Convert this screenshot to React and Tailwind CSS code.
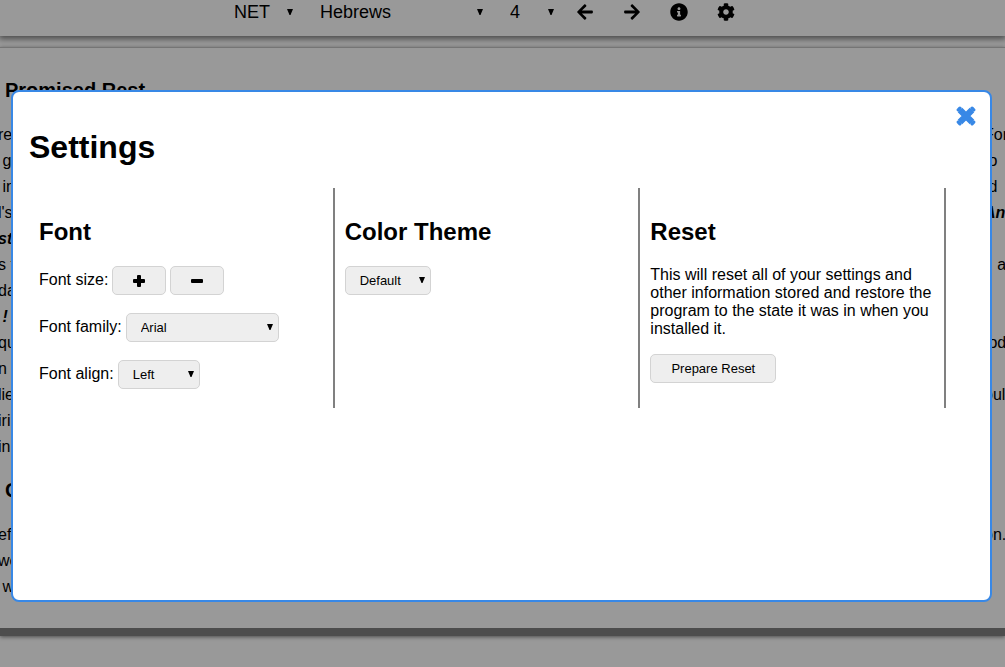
import { FaArrowLeft, FaArrowRight, FaInfoCircle, FaCog } from "react-icons/fa";

const NB = "\u00a0";

const firstPassage = [
  { start: "re", end: "For" },
  { start: NB + "g", end: "to" },
  { start: NB + "in", end: NB + "d" },
  { start: "l's", end: "And", endBold: true },
  { start: "st", end: "", startBold: true },
  { start: "s f", end: NB + NB + NB + "a" },
  { start: "da", end: "" },
  { start: NB + "!", end: "", startBold: true },
  { start: "qu", end: NB + "od" },
  { start: "n h", end: "" },
  { start: "lie", end: "ould" },
  { start: "iri", end: "" },
  { start: "in", end: "" },
];

const secondPassage = [
  { start: "ef", end: "on." },
  { start: "we", end: "" },
  { start: NB + "w", end: "" },
];

function Passage({ lines }) {
  return (
    <div className="-ml-0.5 leading-[26px]">
      {lines.map((line, i) => (
        <p key={i} className="flex h-[26px] justify-between whitespace-nowrap">
          <span className={line.startBold ? "font-bold italic" : ""}>{line.start}</span>
          <span className={line.endBold ? "w-[21px] font-bold italic" : "w-[21px]"}>{line.end}</span>
        </p>
      ))}
    </div>
  );
}

function Triangle({ className }) {
  return (
    <svg viewBox="0 0 6 6" className={className} aria-hidden="true">
      <path d="M0 0h6L3.5 6h-1z" fill="currentColor" />
    </svg>
  );
}

function HeaderSelect({ label, options, className }) {
  return (
    <div className={`relative ${className}`}>
      <select aria-label={label} className="h-6 w-full appearance-none bg-transparent pl-3.5 text-lg leading-6">
        {options.map((o) => (
          <option key={o}>{o}</option>
        ))}
      </select>
      <Triangle className="pointer-events-none absolute top-[9px] right-[7px] h-1.5 w-1.5" />
    </div>
  );
}

function PanelSelect({ id, label, options, className }) {
  return (
    <div className={`relative ${className}`}>
      <select
        id={id}
        aria-label={label}
        className="block h-[29px] w-full appearance-none rounded-[5px] border border-[#d3d3d3] bg-[#eee] pl-3.5 text-[13px]"
      >
        {options.map((o) => (
          <option key={o}>{o}</option>
        ))}
      </select>
      <Triangle className="pointer-events-none absolute top-[11px] right-1.5 h-1.5 w-1.5" />
    </div>
  );
}

function PanelButton({ className, ...props }) {
  return (
    <button
      type="button"
      className={`flex h-[29px] items-center justify-center rounded-[5px] border border-[#d3d3d3] bg-[#eee] text-[13px] ${className}`}
      {...props}
    />
  );
}

function Section({ title, children }) {
  return (
    <section className="border-r-2 border-[#808080] px-2.5 pt-[30px] pb-[19px]">
      <h2 className="mb-5 text-2xl leading-7 font-bold">{title}</h2>
      {children}
    </section>
  );
}

function HeaderButton({ label, children }) {
  return (
    <button type="button" aria-label={label} className="flex h-[23px] w-[47px] items-center justify-center text-lg">
      {children}
    </button>
  );
}

export default function App() {
  return (
    <div className="flex min-h-screen flex-col overflow-hidden bg-white font-['Liberation_Sans',Arial,sans-serif] text-base text-black">
      <header className="flex h-9 justify-center pr-9 shadow-[0_2px_6px_1px_#808080]">
        <div className="flex h-6 gap-1.5">
          <HeaderSelect label="Translation" options={["NET"]} className="w-20" />
          <HeaderSelect label="Book" options={["Hebrews"]} className="w-[184px]" />
          <HeaderSelect label="Chapter" options={["4"]} className="w-[65px]" />
        </div>
        <nav className="flex">
          <HeaderButton label="Previous chapter"><FaArrowLeft /></HeaderButton>
          <HeaderButton label="Next chapter"><FaArrowRight /></HeaderButton>
          <HeaderButton label="About"><FaInfoCircle /></HeaderButton>
          <HeaderButton label="Settings"><FaCog /></HeaderButton>
        </nav>
      </header>

      <main className="mt-[11px] h-[589px] overflow-hidden border-t border-b-8 border-t-[#c4c4c4] border-b-[#808080] pt-[30px] shadow-[0_1px_4px_#808080]">
        <h3 className="mb-5 pl-[5px] text-xl leading-6 font-bold">Promised Rest</h3>
        <Passage lines={firstPassage} />
        <h3 className="mt-[18px] mb-5 pl-[5px] text-xl leading-6 font-bold">G</h3>
        <Passage lines={secondPassage} />
      </main>

      <div className="fixed inset-0 flex bg-black/40 pt-[90px] pr-[13px] pb-[65px] pl-[11px]">
        <div
          role="dialog"
          aria-modal="true"
          aria-labelledby="settings-title"
          className="relative flex-1 rounded-lg border-2 border-[#3888e6] bg-white p-4"
        >
          <button type="button" aria-label="Close" className="absolute top-3.5 right-3.5 text-[#3888e6]">
            <svg viewBox="0 0 20 20" className="h-5 w-5" aria-hidden="true">
              <path
                d="M4 4l12 12M16 4l-12 12"
                stroke="currentColor"
                strokeWidth="6.4"
              />
              <path
                d="M3.9 2.3l-1.6 1.6M16.1 2.3l1.6 1.6M3.9 17.7l-1.6-1.6M16.1 17.7l1.6-1.6"
                stroke="currentColor"
                strokeWidth="3.4"
                strokeLinecap="round"
              />
            </svg>
          </button>
          <h1 id="settings-title" className="mt-5 mb-[22px] text-[32px] leading-[38px] font-bold">
            Settings
          </h1>
          <div className="grid grid-cols-3 pr-7">
            <Section title="Font">
              <div className="flex flex-col gap-[18px]">
                <div className="flex items-center gap-1">
                  <span className="pb-0.5">Font size:</span>
                  <PanelButton aria-label="Increase font size" className="w-[54px]">
                    <svg viewBox="0 0 12 12" className="h-3 w-3" aria-hidden="true">
                      <rect x="4" y="0" width="4" height="12" rx="1" />
                      <rect x="0" y="4" width="12" height="4" rx="1" />
                    </svg>
                  </PanelButton>
                  <PanelButton aria-label="Decrease font size" className="w-[54px]">
                    <svg viewBox="0 0 12 12" className="h-3 w-3" aria-hidden="true">
                      <rect x="0" y="4" width="12" height="4" rx="1" />
                    </svg>
                  </PanelButton>
                </div>
                <div className="flex items-center gap-1">
                  <label htmlFor="font-family" className="pb-0.5">Font family:</label>
                  <PanelSelect id="font-family" options={["Arial"]} className="w-[153px]" />
                </div>
                <div className="flex items-center gap-1">
                  <label htmlFor="font-align" className="pb-0.5">Font align:</label>
                  <PanelSelect id="font-align" options={["Left"]} className="w-[82px]" />
                </div>
              </div>
            </Section>
            <Section title="Color Theme">
              <PanelSelect id="color-theme" label="Color theme" options={["Default"]} className="w-[86px]" />
            </Section>
            <Section title="Reset">
              <p className="mb-4 leading-[18px]">
                This will reset all of your settings and other information stored and restore the program to the
                state it was in when you installed it.
              </p>
              <PanelButton className="w-[126px]">Prepare Reset</PanelButton>
            </Section>
          </div>
        </div>
      </div>
    </div>
  );
}
